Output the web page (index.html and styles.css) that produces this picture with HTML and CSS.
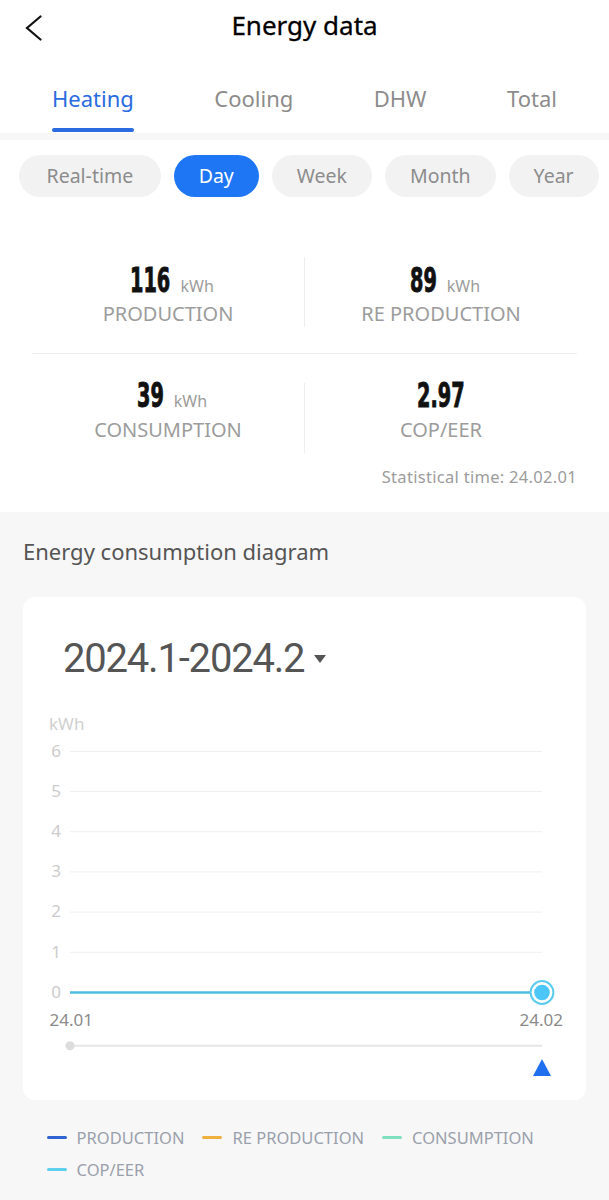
FILE: index.html
```html
<!DOCTYPE html>
<html lang="en">
<head>
<meta charset="utf-8">
<title>Energy data</title>
<link rel="stylesheet" href="styles.css">
</head>
<body>
<header class="top">
  <div class="nav">
    <svg class="back" viewBox="0 0 24 51" width="24" height="51" aria-hidden="true">
      <path d="M18.5 16.5 L5 28 L18.5 39.5" fill="none" stroke="#111" stroke-width="2.2" stroke-linecap="round" stroke-linejoin="miter"/>
    </svg>
    <h1 class="title">Energy data</h1>
    <span></span>
  </div>
  <nav class="tabs">
    <span class="tab active">Heating</span>
    <span class="tab">Cooling</span>
    <span class="tab">DHW</span>
    <span class="tab">Total</span>
  </nav>
</header>

<section class="panel">
  <div class="pills">
    <span class="pill">Real-time</span>
    <span class="pill on">Day</span>
    <span class="pill">Week</span>
    <span class="pill">Month</span>
    <span class="pill">Year</span>
  </div>
  <div class="stats">
    <div class="stat-row r1">
      <div class="stat">
        <div class="val has-unit"><span class="num n3">116</span><span class="unit">kWh</span></div>
        <div class="label">PRODUCTION</div>
      </div>
      <div class="vdiv"></div>
      <div class="stat">
        <div class="val has-unit"><span class="num n2">89</span><span class="unit">kWh</span></div>
        <div class="label">RE PRODUCTION</div>
      </div>
    </div>
    <div class="hdiv"></div>
    <div class="stat-row r2">
      <div class="stat">
        <div class="val has-unit"><span class="num n2">39</span><span class="unit">kWh</span></div>
        <div class="label">CONSUMPTION</div>
      </div>
      <div class="vdiv"></div>
      <div class="stat">
        <div class="val"><span class="num n3p">2.97</span></div>
        <div class="label">COP/EER</div>
      </div>
    </div>
    <div class="stat-time">Statistical time: 24.02.01</div>
  </div>
</section>

<section class="chart-sec">
  <h2 class="sec-title">Energy consumption diagram</h2>
  <div class="card">
    <div class="range">
      <span class="range-text">2024.1-2024.2</span>
      <svg class="caret" viewBox="0 0 12 8" width="12" height="8" aria-hidden="true"><path d="M0 0 H12 L6 8 Z" fill="#555"/></svg>
    </div>
    <svg class="chart" viewBox="0 0 563 417" width="563" height="417">
      <g stroke="#f0f0f0" stroke-width="1">
        <line x1="47" x2="519" y1="68.5" y2="68.5"/>
        <line x1="47" x2="519" y1="108.5" y2="108.5"/>
        <line x1="47" x2="519" y1="148.7" y2="148.7"/>
        <line x1="47" x2="519" y1="188.9" y2="188.9"/>
        <line x1="47" x2="519" y1="229.1" y2="229.1"/>
        <line x1="47" x2="519" y1="269.3" y2="269.3"/>
      </g>
      <text class="ax-unit" x="26" y="46.7">kWh</text>
      <g class="ylab" text-anchor="middle">
        <text x="33" y="73.5">6</text>
        <text x="33" y="113.7">5</text>
        <text x="33" y="153.9">4</text>
        <text x="33" y="194.1">3</text>
        <text x="33" y="234.3">2</text>
        <text x="33" y="274.5">1</text>
        <text x="33" y="314.7">0</text>
      </g>
      <line x1="47" y1="309.5" x2="519" y2="309.5" stroke="#4fbde3" stroke-width="2.5"/>
      <circle cx="519" cy="309.5" r="11.4" fill="#fff" stroke="#5ccbef" stroke-width="2"/>
      <circle cx="519" cy="309.5" r="7.8" fill="#4cc6f6"/>
      <text class="xlab" x="26.5" y="343">24.01</text>
      <text class="xlab" x="540" y="343" text-anchor="end">24.02</text>
      <line x1="47" y1="362.7" x2="519" y2="362.7" stroke="#e6e6e6" stroke-width="2"/>
      <circle cx="47" cy="362.7" r="4.5" fill="#dcdcdc"/>
      <path d="M519 376 L528 393 L510 393 Z" fill="#1f6fee"/>
    </svg>
  </div>
  <div class="legend">
    <span class="lg"><i class="c-prod"></i>PRODUCTION</span>
    <span class="lg"><i class="c-re"></i>RE PRODUCTION</span>
    <span class="lg"><i class="c-cons"></i>CONSUMPTION</span>
    <span class="lg"><i class="c-cop"></i>COP/EER</span>
  </div>
</section>
</body>
</html>
```

FILE: styles.css
```css
* { box-sizing: border-box; }
html, body { margin: 0; padding: 0; }
body {
  background: #f7f7f7;
  font-family: "Noto Sans", Roboto, "Liberation Sans", sans-serif;
  width: 609px;
  min-height: 1200px;
}

/* header */
.top { background: #fff; height: 133px; }
.nav { display: grid; grid-template-columns: 1fr auto 1fr; height: 51px; }
.back { display: block; margin-left: 22px; }
.title {
  margin: 0;
  font-size: 26px;
  font-weight: 400;
  line-height: 51px;
  color: #000;
  -webkit-text-stroke: 0.3px #000;
}
.tabs {
  display: flex;
  justify-content: space-between;
  align-items: flex-start;
  padding: 31.5px 52px 0;
}
.tab { font-size: 22px; line-height: 30px; color: #8c8c8c; }
.tab.active { color: #2a6bdf; }
.tab.active::after {
  content: "";
  display: block;
  height: 4px;
  border-radius: 2px;
  background: #2a6bdf;
  margin-top: 15px;
}

/* period pills + stats */
.panel { background: #fff; margin-top: 7px; padding: 14.5px 0 25px; }
.pills { display: flex; gap: 13px; padding-left: 19px; overflow: hidden; }
.pill {
  flex: none;
  height: 42px;
  line-height: 42px;
  padding: 0 25px;
  border-radius: 21px;
  background: #f2f2f2;
  color: #8c8c8c;
  font-size: 19.5px;
}
.pill:first-child { padding: 0 27.5px; }
.pill.on { background: #1e76f4; color: #fff; }

.stats { margin-top: 60px; padding: 0 32px; }
.stat-row { display: grid; grid-template-columns: 1fr 1px 1fr; align-items: start; }
.vdiv { height: 70px; background: #eeeeee; }
.r1 .stat { padding-top: 7px; }
.r2 .vdiv { margin-top: 3.3px; }
.stat { display: flex; flex-direction: column; align-items: center; }
.val { display: flex; align-items: baseline; justify-content: center; height: 34px; }
.val.has-unit { padding-left: 8px; }
.num {
  display: inline-block;
  font-family: "DejaVu Sans Condensed", "DejaVu Sans", sans-serif;
  font-weight: 700;
  font-size: 33.5px;
  line-height: 34px;
  color: #111;
  -webkit-text-stroke: 0.9px #111;
  transform: scaleX(0.64);
  transform-origin: left center;
}
.n2 { margin-right: -0.45em; }
.n3 { margin-right: -0.676em; }
.n3p { margin-right: -0.8em; }
.unit { font-size: 16px; line-height: 34px; color: #9c9c9c; margin-left: 10px; }
.label { font-size: 20px; line-height: 22px; color: #9c9c9c; margin-top: 5.5px; }
.hdiv { height: 1px; background: #eeeeee; margin: 26.6px 0 25.4px; }
.stat-time {
  margin-top: 13.8px;
  text-align: right;
  font-size: 16.5px;
  letter-spacing: 0.3px;
  line-height: 20px;
  color: #9c9c9c;
}

/* chart */
.chart-sec { padding: 24px 23px 0; }
.sec-title {
  margin: 0;
  font-size: 22px;
  font-weight: 400;
  line-height: 30px;
  color: #555;
}
.card { margin-top: 31.3px; background: #fff; border-radius: 12px; padding-top: 38.3px; }
.range { display: flex; align-items: center; padding-left: 40px; height: 48px; }
.range-text {
  font-family: Roboto, "Liberation Sans", sans-serif;
  font-size: 40px;
  line-height: 48px;
  letter-spacing: -1.2px;
  color: #555;
}
.caret { display: block; margin-left: 10px; }
.chart { display: block; width: 563px; height: 417px; }
.chart text { font-family: "Noto Sans", Roboto, sans-serif; font-size: 17px; }
.ax-unit { fill: #d0d0d0; }
.ylab text { fill: #cccccc; }
.xlab { fill: #8a8a8a; }

.legend { display: flex; flex-wrap: wrap; padding: 21.3px 0 0 23.6px; }
.lg {
  display: flex;
  align-items: center;
  height: 32px;
  margin-right: 18px;
  font-size: 16.5px;
  color: #9aa0ab;
}
.lg i { display: block; width: 20px; height: 3px; border-radius: 2px; margin-right: 10px; }
.c-prod { background: #2f62d2; }
.c-re { background: #f0b040; }
.c-cons { background: #7fe0c0; }
.c-cop { background: #5dd0ee; }
```
